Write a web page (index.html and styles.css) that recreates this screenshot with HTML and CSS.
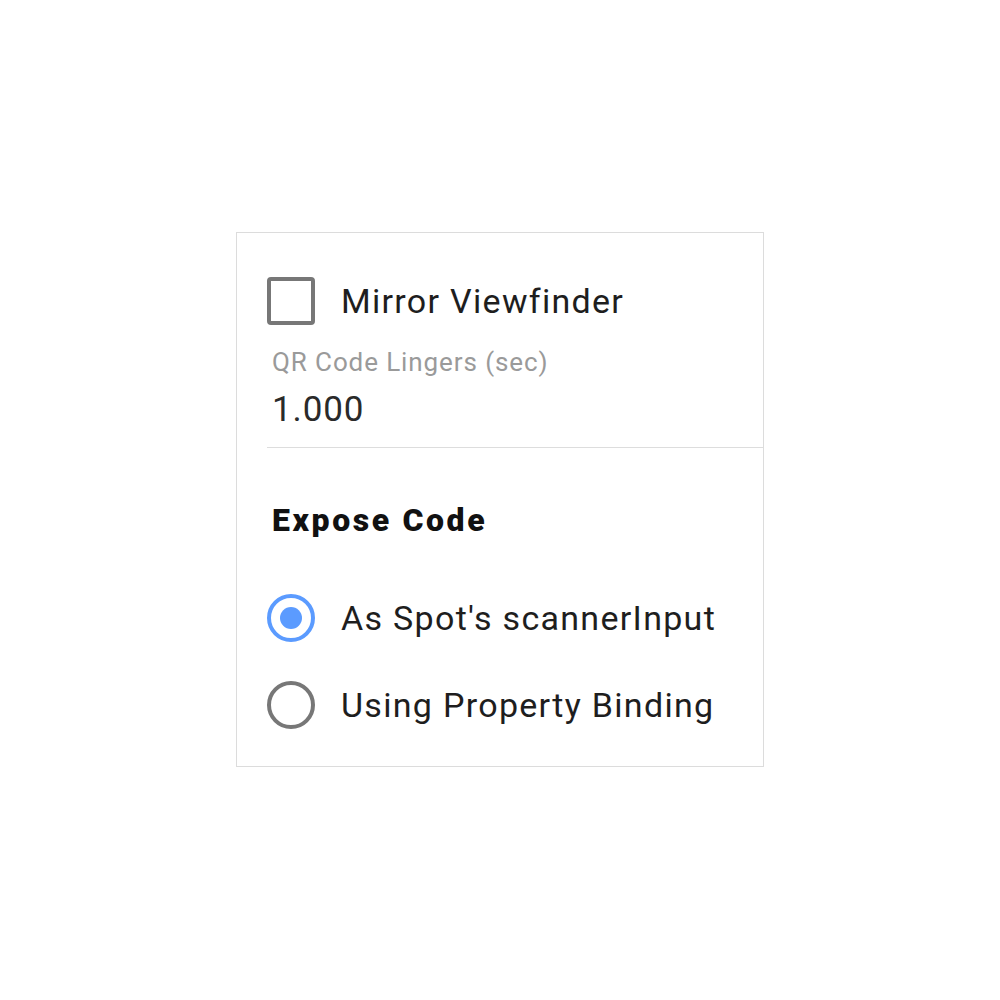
FILE: index.html
```html
<!DOCTYPE html>
<html lang="en">
<head>
  <meta charset="UTF-8" />
  <meta name="viewport" content="width=device-width, initial-scale=1.0" />
  <title>Scanner Settings</title>
  <link rel="stylesheet" href="styles.css">
</head>
<body>
  <div class="panel">
    <label class="check-row">
      <span class="checkbox"></span>
      <span class="option-text">Mirror Viewfinder</span>
    </label>

    <div class="field">
      <div class="field-label">QR Code Lingers (sec)</div>
      <div class="field-value">1.000</div>
    </div>

    <div class="section-title">Expose Code</div>

    <label class="radio-row">
      <span class="radio checked"></span>
      <span class="option-text">As Spot's scannerInput</span>
    </label>
    <label class="radio-row">
      <span class="radio"></span>
      <span class="option-text">Using Property Binding</span>
    </label>
  </div>
</body>
</html>
```

FILE: styles.css
```css
body {
  margin: 0;
  background-color: #fff;
  font-family: Roboto, "Liberation Sans", sans-serif;
  color: #222;
}
.panel {
  box-sizing: border-box;
  width: 528px;
  height: 535px;
  margin: 232px 0 0 236px;
  border: 1px solid #dcdcdc;
  padding: 44px 0 0 30px;
}
.check-row,
.radio-row {
  display: flex;
  align-items: center;
  height: 48px;
}
.checkbox {
  box-sizing: border-box;
  width: 48px;
  height: 48px;
  border: 4px solid #777;
  border-radius: 4px;
}
.option-text {
  font-size: 34px;
  letter-spacing: 1.3px;
  margin-left: 26px;
  color: #1e1e1e;
}
.field {
  border-bottom: 1px solid #ddd;
  padding: 22px 0 17px 5px;
}
.field-label {
  font-size: 26px;
  letter-spacing: 0.9px;
  color: #9a9a9a;
  line-height: 30px;
}
.field-value {
  font-size: 35px;
  letter-spacing: 0.9px;
  color: #2a2a2a;
  line-height: 40px;
  margin-top: 13px;
}
.section-title {
  font-size: 32px;
  font-weight: 900;
  letter-spacing: 2.6px;
  color: #111;
  margin: 52px 0 0 5px;
  line-height: 40px;
}
.radio-row {
  margin-top: 54px;
}
.radio-row + .radio-row {
  margin-top: 39px;
}
.radio {
  box-sizing: border-box;
  width: 48px;
  height: 48px;
  border: 4px solid #777;
  border-radius: 50%;
  display: flex;
  align-items: center;
  justify-content: center;
}
.radio.checked {
  border-color: #5b9bff;
}
.radio.checked::after {
  content: "";
  width: 22px;
  height: 22px;
  border-radius: 50%;
  background-color: #5b9bff;
}
```
